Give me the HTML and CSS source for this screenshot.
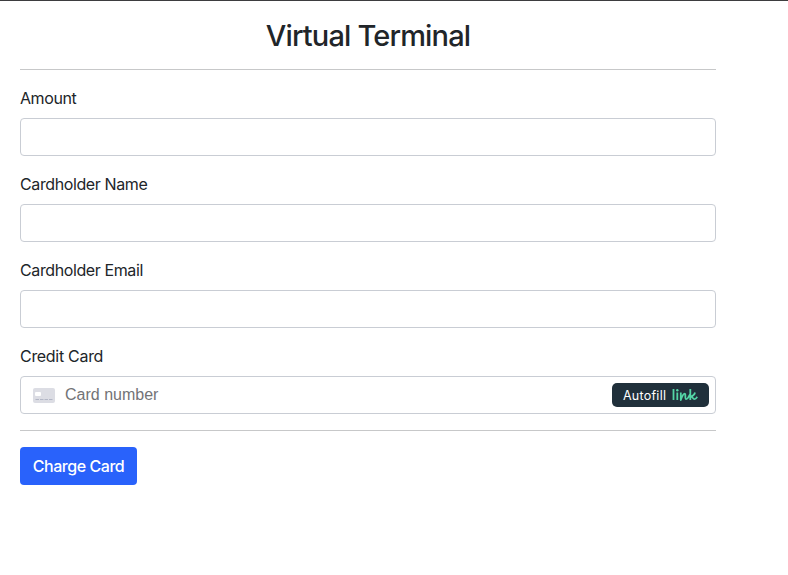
FILE: index.html
```html
<!DOCTYPE html>
<html lang="en">
<head>
<meta charset="utf-8">
<title>Virtual Terminal</title>
<link rel="stylesheet" href="styles.css">
</head>
<body>
<main class="terminal">
  <h2 class="title">Virtual Terminal</h2>
  <hr class="rule">
  <form>
    <div class="field"><label class="label amount-label" for="amount">Amount</label><input class="control" id="amount" type="text"></div>
    <div class="field"><label class="label" for="name">Cardholder Name</label><input class="control" id="name" type="text"></div>
    <div class="field"><label class="label" for="email">Cardholder Email</label><input class="control" id="email" type="email"></div>
    <div class="field"><span class="label card-label">Credit Card</span>
      <div class="control card">
        <svg class="card-icon" width="22" height="15" viewBox="0 0 22 15"><rect width="22" height="15" rx="2" fill="#dcdde4"/><rect x="2" y="4" width="6" height="4" rx="1" fill="#fff"/><path d="M2.500 11.500h3.500m1 0h3.500m1 0h3.500m1 0h3.500" stroke="#b3b7c6" stroke-width="1.2"/></svg>
        <span class="placeholder">Card number</span>
        <button class="autofill" type="button"><span class="autofill-text">Autofill</span>
          <svg class="link-logo" width="27" height="14" viewBox="0 0 27 14" fill="none" stroke="#54d6a6" stroke-width="1.8" stroke-linecap="butt" stroke-linejoin="round"><path d="M2.500 1V12M6.300 4.500V12M9.800 4.500V12C11 8.500 12.300 5.600 13.700 5.600S13.500 11 15.200 11.200 17.400 8.500 19 6.500M19.300 1V12M19.300 8.800C21.500 8.200 23.500 6.800 24 4.500M20 8.500C22 8.500 21.500 11.200 23.500 11.200 25 11.200 25.500 10 26.200 8.800"/><circle cx="6.300" cy="2.200" r="1.200" fill="#54d6a6" stroke="none"/></svg>
        </button>
      </div>
    </div>
    <hr class="rule">
    <button class="charge" type="button">Charge Card</button>
  </form>
</main>
</body>
</html>
```
FILE: styles.css
```css
* { box-sizing: border-box; }
body { margin: 0; border-top: 1px solid #3d3d3f; min-height: 575px; background: #fff; color: #212529; font: 16px/24px Inter, sans-serif; }
.terminal { width: 696px; margin-left: 20px; padding-top: 17px; }
.title { margin: 0; font-size: 29px; line-height: 35px; font-weight: 500; letter-spacing: -0.84px; text-align: center; }
.rule { margin: 16px 0; border: 0; border-top: 1px solid #c7c8c9; }
.field { margin-bottom: 16px; }
.label { display: block; margin-bottom: 8px; letter-spacing: -0.39px; }
.amount-label { letter-spacing: -0.42px; }
.card-label { letter-spacing: -0.3px; }
.control { display: block; width: 100%; height: 38px; padding: 6px 12px; border: 1px solid #c9cdd4; border-radius: 4px; background: #fff; font: inherit; }
.card { display: flex; align-items: center; padding-right: 6px; }
.card-icon { margin-right: 10px; }
.placeholder { color: #737376; font-family: "Liberation Sans", sans-serif; }
.autofill { display: flex; align-items: center; width: 97px; height: 24px; margin-left: auto; padding: 0 9px 0 11px; border: 0; border-radius: 5px; background: #20303b; color: #fff; font: 400 12.5px/24px Inter, sans-serif; letter-spacing: 0.25px; }
.autofill-text { padding-top: 1px; }
.link-logo { flex: none; margin-left: 5px; }
.charge { width: 117px; height: 38px; padding: 0; border: 0; border-radius: 4px; background: #2962fb; color: #fff; font: 500 16px/24px Inter, sans-serif; letter-spacing: -0.45px; }
```
